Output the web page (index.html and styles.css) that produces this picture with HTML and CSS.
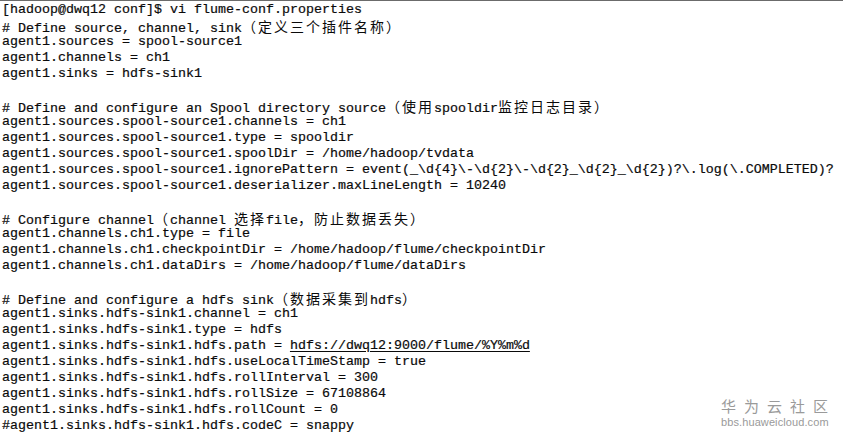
FILE: index.html
```html
<!DOCTYPE html>
<html>
<head>
<meta charset="utf-8">
<link rel="stylesheet" href="styles.css">
</head>
<body>
<div class="term">
<div class="ln">[hadoop@dwq12 conf]$ vi flume-conf.properties</div>
<div class="ln"># Define source, channel, sink<span class="cjk">（定义三个插件名称）</span></div>
<div class="ln">agent1.sources = spool-source1</div>
<div class="ln">agent1.channels = ch1</div>
<div class="ln">agent1.sinks = hdfs-sink1</div>
<div class="ln"></div>
<div class="ln"># Define and configure an Spool directory source<span class="cjk">（使用</span>spooldir<span class="cjk">监控日志目录）</span></div>
<div class="ln">agent1.sources.spool-source1.channels = ch1</div>
<div class="ln">agent1.sources.spool-source1.type = spooldir</div>
<div class="ln">agent1.sources.spool-source1.spoolDir = /home/hadoop/tvdata</div>
<div class="ln">agent1.sources.spool-source1.ignorePattern = event(_\d{4}\-\d{2}\-\d{2}_\d{2}_\d{2})?\.log(\.COMPLETED)?</div>
<div class="ln">agent1.sources.spool-source1.deserializer.maxLineLength = 10240</div>
<div class="ln"></div>
<div class="ln"># Configure channel<span class="cjk">（</span>channel <span class="cjk">选择</span>file<span class="cjk">，防止数据丢失）</span></div>
<div class="ln">agent1.channels.ch1.type = file</div>
<div class="ln">agent1.channels.ch1.checkpointDir = /home/hadoop/flume/checkpointDir</div>
<div class="ln">agent1.channels.ch1.dataDirs = /home/hadoop/flume/dataDirs</div>
<div class="ln"></div>
<div class="ln"># Define and configure a hdfs sink<span class="cjk">（数据采集到</span>hdfs<span class="cjk">）</span></div>
<div class="ln">agent1.sinks.hdfs-sink1.channel = ch1</div>
<div class="ln">agent1.sinks.hdfs-sink1.type = hdfs</div>
<div class="ln">agent1.sinks.hdfs-sink1.hdfs.path = <span class="link">hdfs://dwq12:9000/flume/%Y%m%d</span></div>
<div class="ln">agent1.sinks.hdfs-sink1.hdfs.useLocalTimeStamp = true</div>
<div class="ln">agent1.sinks.hdfs-sink1.hdfs.rollInterval = 300</div>
<div class="ln">agent1.sinks.hdfs-sink1.hdfs.rollSize = 67108864</div>
<div class="ln">agent1.sinks.hdfs-sink1.hdfs.rollCount = 0</div>
<div class="ln">#agent1.sinks.hdfs-sink1.hdfs.codeC = snappy</div>
</div>
<div class="mark">
<div class="mark-cn">华为云社区</div>
<div class="mark-en">bbs.huaweicloud.com</div>
</div>
</body>
</html>
```

FILE: styles.css
```css
html, body {
  margin: 0;
  padding: 0;
  background: #ffffff;
}
body {
  width: 843px;
  height: 438px;
  overflow: hidden;
  position: relative;
  border-top: 1px solid #6b6b6b;
  box-sizing: border-box;
}
.term {
  padding: 1px 0 0 2px;
  font-family: "Liberation Mono", "Courier New", monospace;
  font-size: 13.33px;
  color: #0a0a0a;
  -webkit-text-stroke: 0.2px #0a0a0a;
}
.ln {
  height: 16px;
  line-height: 16px;
  white-space: pre;
}
.cjk {
  display: inline-block;
  vertical-align: baseline;
  font-family: "Noto Sans CJK SC", sans-serif;
  font-size: 14px;
  letter-spacing: 2px;
  line-height: 16px;
  -webkit-text-stroke: 0;
}
.link {
  text-decoration: underline;
  text-underline-offset: 2px;
}
.mark {
  position: absolute;
  left: 721px;
  top: 396px;
  width: 110px;
  color: #9a9a9a;
  font-family: "Liberation Sans", Arial, sans-serif;
}
.mark-cn {
  font-family: "Noto Sans CJK SC", sans-serif;
  font-size: 15px;
  line-height: 18px;
  letter-spacing: 8px;
  white-space: nowrap;
}
.mark-en {
  font-size: 11px;
  line-height: 14px;
  letter-spacing: 0.1px;
  white-space: nowrap;
}
```
